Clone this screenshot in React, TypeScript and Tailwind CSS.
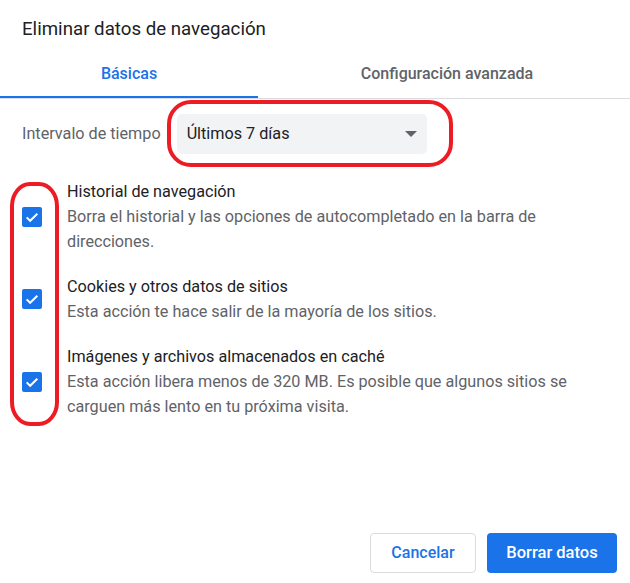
import React from "react";

function Check() {
  return (
    <div className="w-[20px] h-[20px] rounded-[2px] bg-[#1a73e8] flex items-center justify-center shrink-0">
      <svg width="16" height="16" viewBox="0 0 24 24" fill="none">
        <path d="M4 12.5l5.2 5.2L20 7" stroke="white" strokeWidth="3" strokeLinecap="butt" strokeLinejoin="miter" />
      </svg>
    </div>
  );
}

const items = [
  {
    title: "Historial de navegación",
    desc: "Borra el historial y las opciones de autocompletado en la barra de direcciones.",
  },
  {
    title: "Cookies y otros datos de sitios",
    desc: "Esta acción te hace salir de la mayoría de los sitios.",
  },
  {
    title: "Imágenes y archivos almacenados en caché",
    desc: "Esta acción libera menos de 320 MB. Es posible que algunos sitios se carguen más lento en tu próxima visita.",
  },
];

export default function App() {
  return (
    <div
      className="relative w-[630px] h-[583px] bg-white flex flex-col overflow-hidden"
      style={{ fontFamily: "Roboto, 'Liberation Sans', sans-serif" }}
    >
      <div className="pl-[22px] pt-[16px] text-[18.7px] leading-[26px] text-[#202124]">
        Eliminar datos de navegación
      </div>

      <div className="mt-[7px] flex border-b border-[#dadce0]">
        <div className="relative w-[258px] h-[49px] flex items-center justify-center text-[16px] font-medium text-[#1a73e8]">
          Básicas
          <div className="absolute left-0 right-0 bottom-0 h-[2px] bg-[#1a73e8]" />
        </div>
        <div className="flex-1 h-[49px] flex items-center justify-center text-[16px] font-medium text-[#5f6368] pl-[6px]">
          Configuración avanzada
        </div>
      </div>

      <div className="px-[22px]">
        <div className="mt-[15px] flex items-center">
          <span className="text-[16.2px] text-[#5f6368]">Intervalo de tiempo</span>
          <div className="ml-[16px] w-[250px] h-[40px] rounded-[5px] bg-[#f1f3f4] flex items-center justify-between pl-[10px] pr-[10px]">
            <span className="text-[16.2px] text-[#202124]">Últimos 7 días</span>
            <svg width="12" height="6" viewBox="0 0 12 6">
              <path d="M0 0h12L6 6z" fill="#5f6368" />
            </svg>
          </div>
        </div>

        <div className="mt-[25px] flex flex-col gap-[20px]">
          {items.map((it) => (
            <div key={it.title} className="flex items-center gap-[25px]">
              <Check />
              <div className="text-[16.2px] leading-[25px] pr-[18px]">
                <div className="text-[#202124]">{it.title}</div>
                <div className="text-[#5f6368]">{it.desc}</div>
              </div>
            </div>
          ))}
        </div>
      </div>

      <div className="mt-auto flex justify-end gap-[11px] pr-[13px] pb-[10px]">
        <button className="w-[106px] h-[40px] rounded-[4px] border border-[#dadce0] bg-white text-[16px] font-medium text-[#1a73e8]">
          Cancelar
        </button>
        <button className="w-[130px] h-[40px] rounded-[4px] bg-[#1a73e8] text-[16.5px] font-medium text-white">
          Borrar datos
        </button>
      </div>

      {/* red annotation marks */}
      <svg className="absolute left-0 top-0 pointer-events-none" width="630" height="583">
        <rect x="169" y="102" width="282" height="63" rx="22" ry="22" fill="none" stroke="#ed1c24" strokeWidth="4" />
        <rect x="12" y="184" width="45" height="240" rx="18" ry="22" fill="none" stroke="#ed1c24" strokeWidth="4" />
      </svg>
    </div>
  );
}
